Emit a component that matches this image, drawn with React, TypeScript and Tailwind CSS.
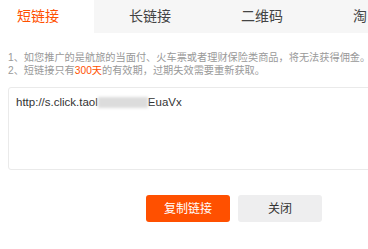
const tabs = ['短链接', '长链接', '二维码', '淘口令'];

export default function App() {
  return (
    <div
      className="w-[368px] h-[249px] overflow-hidden bg-white"
      style={{ fontFamily: '"Liberation Sans","Noto Sans CJK SC",sans-serif' }}
    >
      {/* tabs */}
      <div className="flex h-[33px] ml-[-18px]">
        {tabs.map((t, i) => (
          <div
            key={t}
            className={
              i === 0
                ? 'w-[112px] shrink-0 flex items-center justify-center text-[14px] text-[#ff5000] bg-white'
                : 'w-[112px] shrink-0 flex items-center justify-center text-[14px] text-[#444] bg-[#f6f6f6]'
            }
          >
            {t}
          </div>
        ))}
      </div>

      {/* notes */}
      <div className="mt-[18px] ml-[8px] text-[10.2px] leading-[13px] text-[#999] whitespace-nowrap">
        <div>1、如您推广的是航旅的当面付、火车票或者理财保险类商品，将无法获得佣金。</div>
        <div>
          2、短链接只有<span className="text-[#ff5000]">300天</span>的有效期，过期失效需要重新获取。
        </div>
      </div>

      {/* link box */}
      <div className="mt-[10px] ml-[8px] w-[380px] h-[83px] border border-[#eaeaea] rounded-[3px] pl-[7px] pt-[6px] text-[11.5px] leading-[16px] text-[#333] whitespace-nowrap">
        http://s.click.taol<span className="inline-block align-middle w-[50px] h-[11px] bg-[#dcdcdc] blur-[1.5px]"></span>EuaVx
      </div>

      {/* buttons */}
      <div className="mt-[25px] pl-[146px] flex gap-[8px]">
        <button className="w-[84px] h-[27px] rounded-[3px] bg-[#ff5000] text-white text-[12px]">复制链接</button>
        <button className="w-[84px] h-[27px] rounded-[3px] bg-[#eeeeef] text-[#333] text-[12px]">关闭</button>
      </div>
    </div>
  );
}
